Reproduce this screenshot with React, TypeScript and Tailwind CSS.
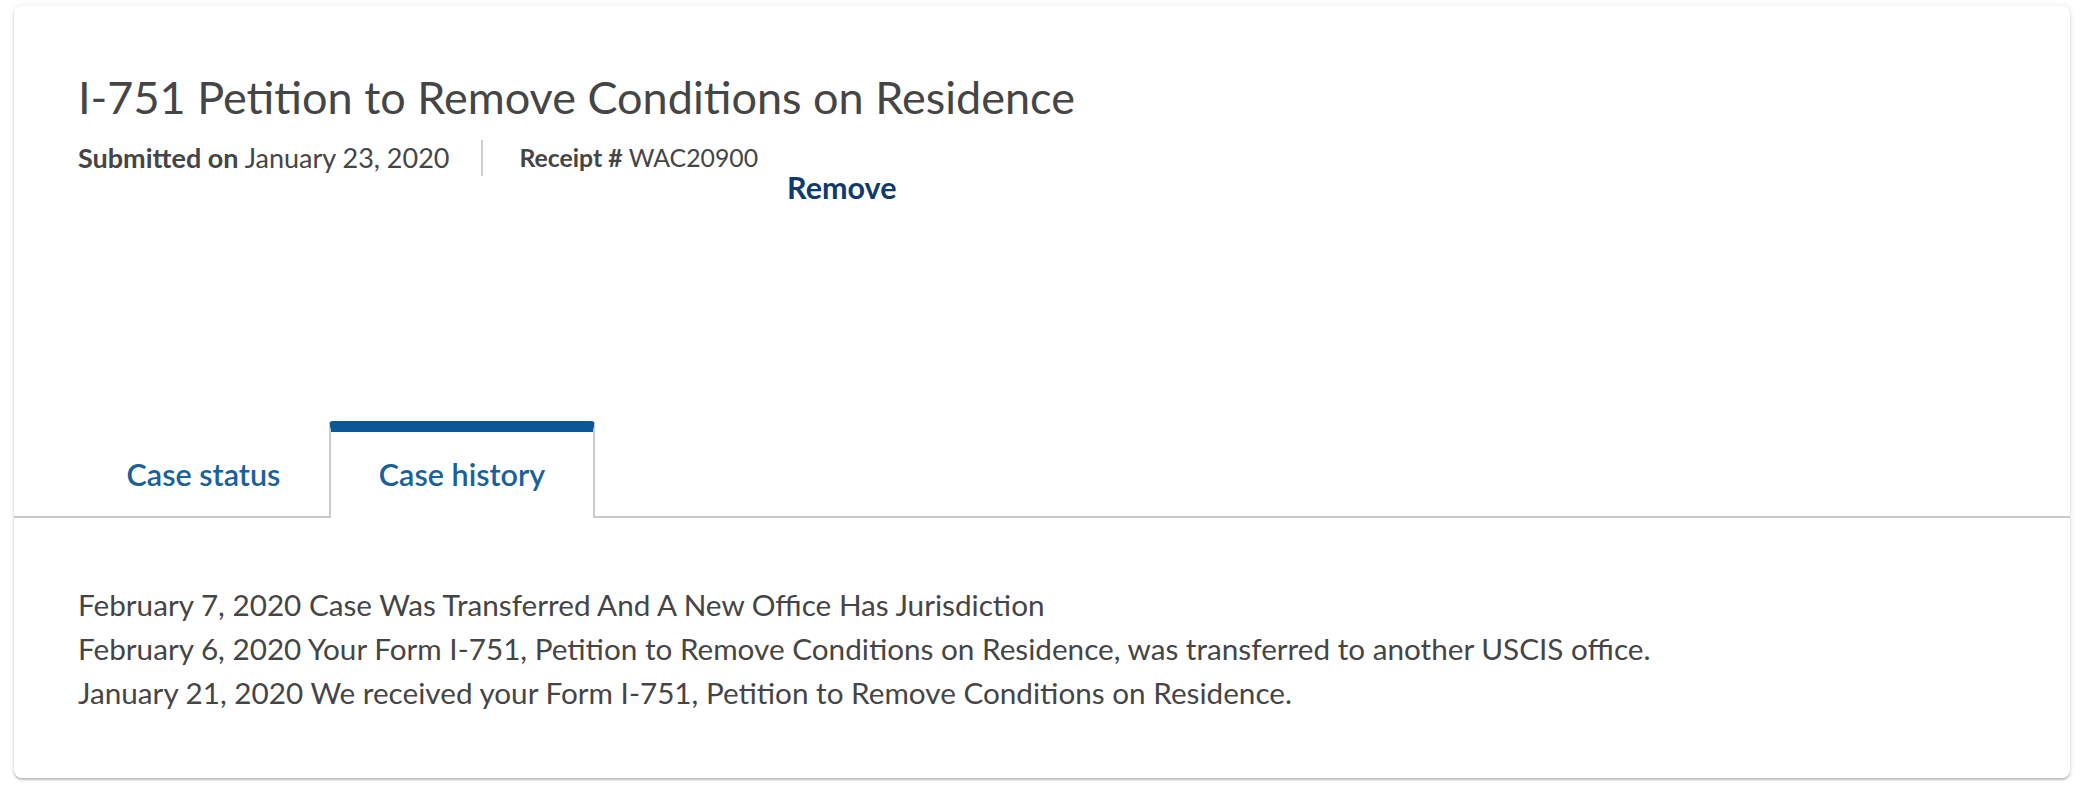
import { useState } from "react";

const history = [
  "February 7, 2020 Case Was Transferred And A New Office Has Jurisdiction",
  "February 6, 2020 Your Form I-751, Petition to Remove Conditions on Residence, was transferred to another USCIS office.",
  "January 21, 2020 We received your Form I-751, Petition to Remove Conditions on Residence.",
];

export default function App() {
  const [tab, setTab] = useState<"status" | "history">("history");

  return (
    <div className="min-h-screen bg-white pl-[14px] pr-[16px] pt-[6px] font-['Lato',sans-serif] text-[#454545]">
      <div className="rounded-[8px] bg-white shadow-[0_0_6px_rgba(0,0,0,0.10),0_2px_2px_rgba(0,0,0,0.22)]">
        {/* header */}
        <div className="px-[64px] pt-[64px]">
          <h1 className="text-[45px] leading-[54px] font-normal text-[#454545]">
            I-751 Petition to Remove Conditions on Residence
          </h1>
          <div className="mt-4 flex items-start leading-[36px]">
            <div className="pr-[32px] text-[27px]">
              <span className="font-bold">Submitted on</span> January 23, 2020
            </div>
            <div className="h-[36px] w-[2px] bg-[#d0d0d0]" />
            <div className="pl-[36px] text-[24.8px]">
              <span className="font-bold">Receipt #</span> WAC20900
            </div>
            <button className="ml-[29px] mt-[29px] text-[30.5px] font-bold text-[#0f3a6c]">Remove</button>
          </div>
        </div>

        {/* tabs */}
        <div className="mt-[216px] flex border-b-2 border-[#c9c9c9] pl-[64px]">
          <button
            onClick={() => setTab("status")}
            className={`-mb-[2px] flex h-[97px] w-[251px] items-center justify-center rounded-t-[4px] border-x-2 border-t-[11px] text-[30.5px] font-semibold ${
              tab === "status" ? "border-x-[#cccccc] border-t-[#0e5796] bg-white" : "border-transparent"
            } text-[#1b6199]`}
          >
            Case status
          </button>
          <button
            onClick={() => setTab("history")}
            className={`-mb-[2px] flex h-[97px] w-[266px] items-center justify-center rounded-t-[4px] border-x-2 border-t-[11px] text-[30.5px] font-semibold ${
              tab === "history" ? "border-x-[#cccccc] border-t-[#0e5796] bg-white" : "border-transparent"
            } text-[#1b6199]`}
          >
            Case history
          </button>
        </div>

        {/* content */}
        <div className="px-[64px] pt-[65px] pb-[63px] text-[29.7px] leading-[44px]">
          {tab === "history" ? (
            history.map((line) => <div key={line}>{line}</div>)
          ) : (
            <div>Case Was Transferred And A New Office Has Jurisdiction</div>
          )}
        </div>
      </div>
    </div>
  );
}
